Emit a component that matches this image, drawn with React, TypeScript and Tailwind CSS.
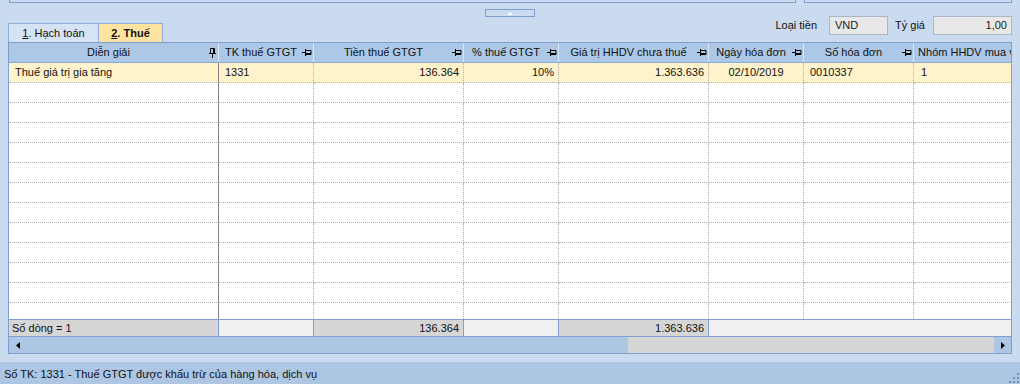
import React from "react";

type Col = {
  label: string;
  w: string;
  pin?: "v" | "h";
};

const cols: Col[] = [
  { label: "Diễn giải", w: "w-[210px]", pin: "v" },
  { label: "TK thuế GTGT", w: "w-[95px]" },
  { label: "Tiền thuế GTGT", w: "w-[150px]" },
  { label: "% thuế GTGT", w: "w-[95px]" },
  { label: "Giá trị HHDV chưa thuế", w: "w-[150px]" },
  { label: "Ngày hóa đơn", w: "w-[95px]" },
  { label: "Số hóa đơn", w: "w-[110px]" },
  { label: "Nhóm HHDV mua vào", w: "w-[128px]" },
];

// first row of data, alignment per column
const row: { text: string; align: string }[] = [
  { text: "Thuế giá trị gia tăng", align: "justify-start pl-[6px]" },
  { text: "1331", align: "justify-start pl-[6px]" },
  { text: "136.364", align: "justify-end pr-[4px]" },
  { text: "10%", align: "justify-end pr-[4px]" },
  { text: "1.363.636", align: "justify-end pr-[4px]" },
  { text: "02/10/2019", align: "justify-center" },
  { text: "0010337", align: "justify-start pl-[6px]" },
  { text: "1", align: "justify-start pl-[7px]" },
];

const PinH = () => (
  <svg width="10" height="7" viewBox="0 0 10 7" className="block">
    <path d="M0 3.5h3" stroke="#000" strokeWidth="1" />
    <path d="M3.5 0v7" stroke="#000" strokeWidth="1" />
    <path d="M3.5 1.5h5.5v4h-5.5" fill="none" stroke="#000" strokeWidth="1" />
    <path d="M4 4.5h5" stroke="#000" strokeWidth="1" />
  </svg>
);

const PinV = () => (
  <svg width="7" height="10" viewBox="0 0 7 10" className="block">
    <path d="M1.5 0.5h4v5h-4z" fill="none" stroke="#000" strokeWidth="1" />
    <path d="M4.5 1v4" stroke="#000" strokeWidth="1" />
    <path d="M0 5.5h7" stroke="#000" strokeWidth="1" />
    <path d="M3.5 6v4" stroke="#000" strokeWidth="1" />
  </svg>
);

export default function App() {
  return (
    <div className="w-[1020px] h-[384px] overflow-hidden bg-[#cadbf0] font-['Liberation_Sans',Arial,sans-serif] text-[11px] text-[#111] flex flex-col">
      {/* bottoms of the panels above */}
      <div className="h-[3px] flex shrink-0">
        <div className="ml-[9px] w-[787px] border-x border-b border-[#7f9fcf]" />
        <div className="ml-[8px] w-[208px] border-x border-b border-[#7f9fcf]" />
      </div>

      {/* splitter button */}
      <div className="h-[13px] shrink-0 flex justify-center pt-[6px]">
        <div className="w-[50px] h-[8px] border border-[#7f9fcf] bg-[#cadbf0] flex items-center justify-center">
          <svg width="6" height="3" viewBox="0 0 6 3" className="block">
            <path d="M0 3L3 0L6 3Z" fill="#fff" />
          </svg>
        </div>
      </div>

      {/* tabs + currency */}
      <div className="h-[26px] shrink-0 flex justify-between">
        <div className="self-end ml-[8px] flex h-[19px]">
          <div className="w-[91px] border-l border-t border-r border-[#8eaed8] bg-[#d6e3f4] flex items-center justify-center">
            <span>
              <u>1</u>. Hạch toán
            </span>
          </div>
          <div className="w-[64px] border-t border-r border-[#8eaed8] bg-[#ffe3a0] flex items-center justify-center font-bold">
            <span>
              <u>2</u>. Thuế
            </span>
          </div>
        </div>
        <div className="self-start flex items-center pr-[8px] h-[19px]">
          <span className="mr-[12px]">Loại tiền</span>
          <div className="w-[59px] h-[19px] border border-[#aab7c9] bg-[#e8e8e8] flex items-center pl-[5px] text-[#222]">
            VND
          </div>
          <span className="ml-[7px] mr-[8px]">Tỷ giá</span>
          <div className="w-[79px] h-[19px] border border-[#aab7c9] bg-[#e8e8e8] flex items-center justify-end pr-[4px] text-[#222]">
            1,00
          </div>
        </div>
      </div>

      {/* grid */}
      <div className="ml-[8px] w-[1004px] h-[312px] shrink-0 border border-[#7f9fcf] flex flex-col overflow-hidden bg-white">
        {/* header */}
        <div className="h-[20px] shrink-0 flex bg-[#adc8e7] border-b border-[#8aabd6]">
          {cols.map((c) => (
            <div
              key={c.label}
              className={`${c.w} shrink-0 flex items-center border-r border-[#dde7f4] pl-[2px] overflow-hidden`}
            >
              <span className="flex-1 text-center whitespace-nowrap">{c.label}</span>
              <span className="w-[12px] shrink-0 flex items-center justify-center">
                {c.pin === "v" ? <PinV /> : <PinH />}
              </span>
            </div>
          ))}
        </div>

        {/* rows */}
        <div className="flex-1 overflow-hidden">
          {Array.from({ length: 13 }).map((_, i) => (
            <div key={i} className={`h-[20px] flex ${i === 0 ? "bg-[#fff3cb]" : "bg-white"}`}>
              {cols.map((c, j) => (
                <div
                  key={c.label}
                  className={`${c.w} shrink-0 flex items-center border-r border-b whitespace-nowrap overflow-hidden ${
                    j === 0
                      ? "[border-right-style:solid] [border-bottom-style:dotted] border-r-[#808080] border-b-[#b0b0b0]"
                      : "border-dotted border-[#b0b0b0]"
                  } ${i === 0 ? row[j].align : ""}`}
                >
                  {i === 0 ? row[j].text : ""}
                </div>
              ))}
            </div>
          ))}
        </div>

        {/* footer */}
        <div className="h-[17px] shrink-0 flex border-t border-[#7f9fcf] bg-[#f0f0f0]">
          <div className="w-[210px] shrink-0 flex items-center pl-[3px] bg-[#d6d6d6] border-r border-[#7f9fcf]">
            Số dòng = 1
          </div>
          <div className="w-[95px] shrink-0 border-r border-[#7f9fcf]" />
          <div className="w-[150px] shrink-0 flex items-center justify-end pr-[4px] bg-[#d6d6d6] border-r border-[#7f9fcf]">
            136.364
          </div>
          <div className="w-[95px] shrink-0 border-r border-[#7f9fcf]" />
          <div className="w-[150px] shrink-0 flex items-center justify-end pr-[4px] bg-[#d6d6d6] border-r border-[#7f9fcf]">
            1.363.636
          </div>
          <div className="flex-1" />
        </div>

        {/* horizontal scrollbar */}
        <div className="h-[17px] shrink-0 flex border-t border-[#7f9fcf] bg-[#adc6e4]">
          <div className="w-[17px] flex items-center justify-center">
            <svg width="4" height="7" viewBox="0 0 4 7" className="block">
              <path d="M4 0L0 3.5L4 7Z" fill="#000" />
            </svg>
          </div>
          <div className="w-[602px]" />
          <div className="w-[366px] bg-[#d6d6d6]" />
          <div className="flex-1 flex items-center justify-center">
            <svg width="4" height="7" viewBox="0 0 4 7" className="block">
              <path d="M0 0L4 3.5L0 7Z" fill="#000" />
            </svg>
          </div>
        </div>
      </div>

      {/* status bar */}
      <div className="mt-[8px] h-[22px] shrink-0 bg-[#adc6e4] flex items-center justify-between pl-[4px]">
        <span className="pt-[3px]">Số TK: 1331 - Thuế GTGT được khấu trừ của hàng hóa, dịch vụ</span>
        <svg width="10" height="10" viewBox="0 0 10 10" className="self-end block mr-[1px] mb-[1px]">
          <rect x="8" y="0" width="2" height="2" fill="#6f8db8" />
          <rect x="4" y="4" width="2" height="2" fill="#6f8db8" />
          <rect x="8" y="4" width="2" height="2" fill="#6f8db8" />
          <rect x="0" y="8" width="2" height="2" fill="#6f8db8" />
          <rect x="4" y="8" width="2" height="2" fill="#6f8db8" />
          <rect x="8" y="8" width="2" height="2" fill="#6f8db8" />
        </svg>
      </div>
    </div>
  );
}
